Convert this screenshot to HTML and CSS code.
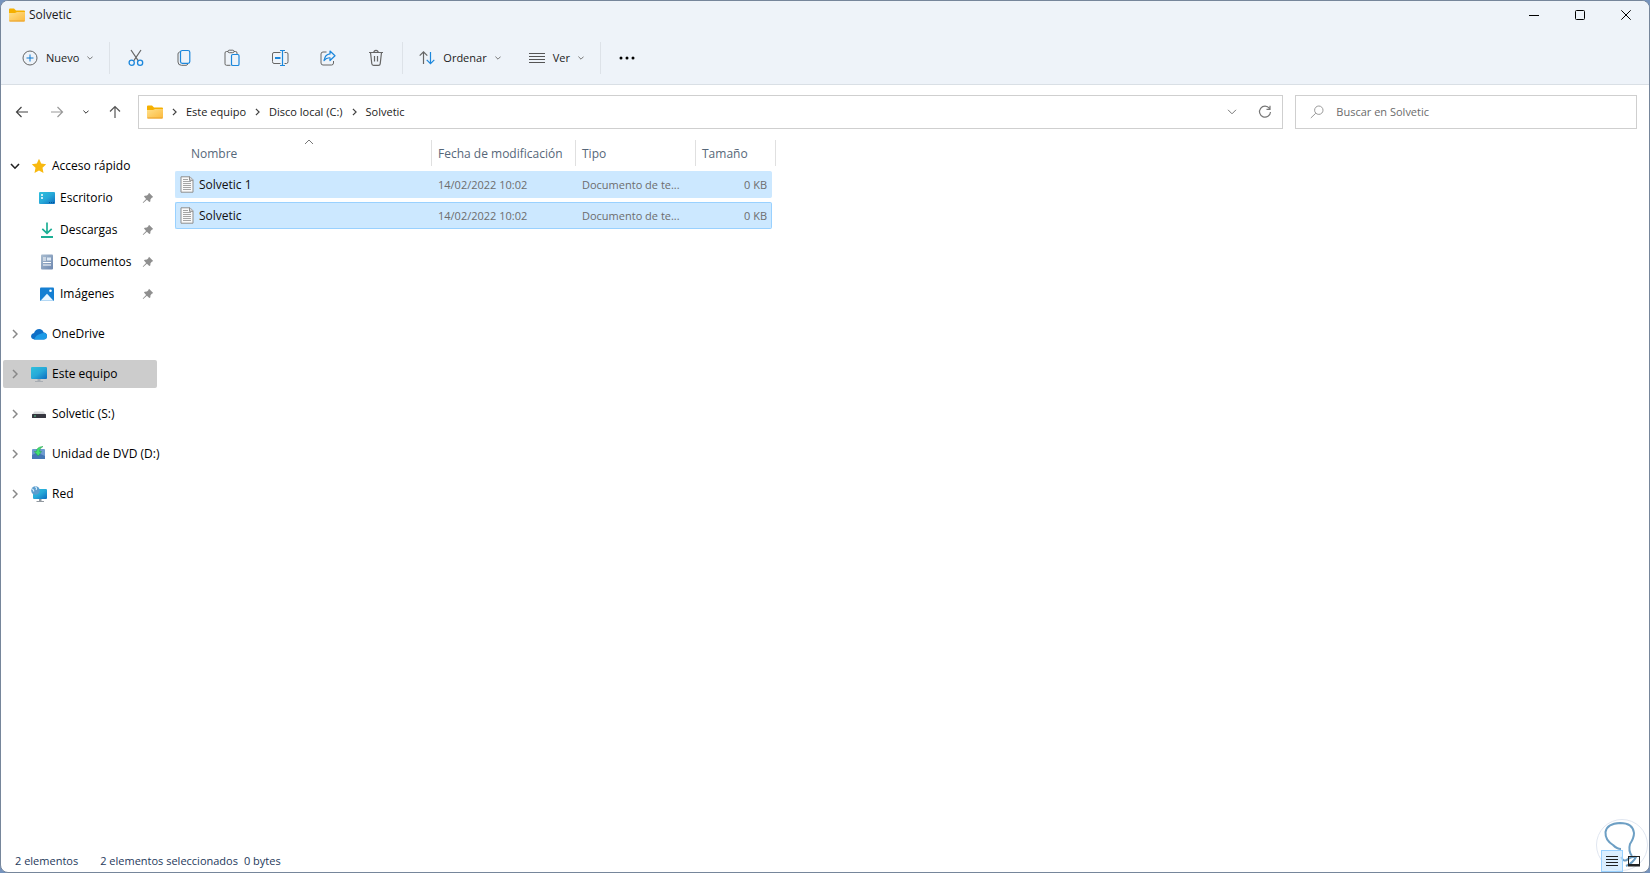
FILE: index.html
```html
<!DOCTYPE html>
<html lang="es">
<head>
    <meta charset="UTF-8">
    <meta name="viewport" content="width=device-width, initial-scale=1.0">
    <title>Solvetic</title>
    <link rel="stylesheet" href="styles.css">
</head>
<body>
    <!-- shared icons -->
    <svg class="sprite" aria-hidden="true">
        <defs>
            <linearGradient id="gFolder" x1="0" y1="0" x2="1" y2="1">
                <stop offset="0" stop-color="#ffe08a"/><stop offset="1" stop-color="#fbb93c"/>
            </linearGradient>
            <linearGradient id="gScreen" x1="0" y1="0" x2="1" y2="1">
                <stop offset="0" stop-color="#2fc0dc"/><stop offset=".5" stop-color="#27a9d8"/><stop offset="1" stop-color="#0c6cc0"/>
            </linearGradient>
            <linearGradient id="gDoc" x1="0" y1="0" x2="1" y2="1">
                <stop offset="0" stop-color="#a9bdd0"/><stop offset="1" stop-color="#6d87b0"/>
            </linearGradient>
        </defs>
        <symbol id="folder" viewBox="0 0 16 14">
            <path d="M0 1.500Q0 .5 1 .5H5L7 2.500H15Q16 2.500 16 3.500V6H0z" fill="#f5b000"/>
            <path d="M0 5H6L8 4H16V12.500Q16 13.500 15 13.500H1Q0 13.500 0 12.500z" fill="url(#gFolder)"/>
            <path d="M.5 13H15.500" stroke="#e9a02c"/>
        </symbol>
        <symbol id="down" viewBox="0 0 6 4"><path d="M.4 .6L3 3.200L5.600 .6" fill="none" stroke="currentColor"/></symbol>
        <symbol id="right" viewBox="0 0 6 10"><path d="M1 1L5 5L1 9" fill="none" stroke="currentColor" stroke-width="1.500"/></symbol>
        <symbol id="pin" viewBox="0 0 12 12">
            <path d="M7 .8L11.200 5L9.800 5.800L8.500 7.200L8.300 9.400L7.300 10L4.900 7.700L1.200 11L.7 10.500L4.100 6.900L2 4.600L2.700 3.700L5 3.600L6.300 2.200z" fill="#8f8f8f"/>
        </symbol>
        <symbol id="textfile" viewBox="0 0 14 17">
            <path d="M1 .8H10L13 3.800V16.200H1z" fill="#fafafa" stroke="#8d8d8d"/>
            <path d="M9.500 .8V4.300H13" fill="#ddd" stroke="#8d8d8d"/>
            <path d="M3 3.500H8M3 5.500H11M3 7.500H11M3 9.500H11M3 11.500H11M3 13.500H11" stroke="#a5a5a5"/>
        </symbol>
    </svg>

    <div class="window">
        <header class="top">
            <div class="titlebar">
                <svg class="folder"><use href="#folder"/></svg>
                <h1 class="title">Solvetic</h1>
                <div class="window-buttons">
                    <button type="button" aria-label="Minimizar"><svg width="10" height="10"><path d="M0 5.500H10" stroke="#000"/></svg></button>
                    <button type="button" aria-label="Maximizar"><svg width="10" height="10"><rect x=".5" y=".5" width="9" height="9" rx="1" fill="none" stroke="#000"/></svg></button>
                    <button type="button" aria-label="Cerrar"><svg width="10" height="10"><path d="M.3 .3L9.700 9.700M9.700 .3L.3 9.700" stroke="#000"/></svg></button>
                </div>
            </div>

            <div class="toolbar">
                <button type="button" class="menu-button">
                    <svg width="16" height="16" fill="none"><circle cx="8" cy="8" r="7" stroke="#666"/><path d="M4.500 8H11.500M8 4.500V11.500" stroke="#0f78d0"/></svg>
                    Nuevo
                    <svg class="arrow"><use href="#down"/></svg>
                </button>
                <span class="separator"></span>
                <div class="tools">
                    <button type="button" aria-label="Cortar">
                        <svg width="16" height="18" fill="none"><path d="M3 1L10.500 12.200M13 1L5.500 12.200" stroke="#666" stroke-width="1.200"/><circle cx="3.700" cy="13.800" r="2.600" stroke="#1c87dc" stroke-width="1.300"/><circle cx="12.100" cy="13.800" r="2.600" stroke="#1c87dc" stroke-width="1.300"/></svg>
                    </button>
                    <button type="button" aria-label="Copiar">
                        <svg width="16" height="18" fill="none"><path d="M4 3H3.500Q2 3.500 2 5V13Q2 16.300 5.500 16.300H10Q11.300 16.300 11.800 15" stroke="#666"/><rect x="4.500" y="1.500" width="9.300" height="12.800" rx="1.800" stroke="#1c87dc" stroke-width="1.200"/></svg>
                    </button>
                    <button type="button" aria-label="Pegar">
                        <svg width="16" height="18" fill="none"><path d="M6.500 16.300H2.500Q1 16.300 1 14.800V4Q1 2.500 2.500 2.500H4M10 2.500H11.500Q13 2.500 13 4V5" stroke="#666"/><rect x="4" y="1.200" width="6" height="2.500" rx="1.200" stroke="#666"/><rect x="7.500" y="5.500" width="7.500" height="11" rx="1.300" stroke="#1c87dc" stroke-width="1.200"/></svg>
                    </button>
                    <button type="button" aria-label="Cambiar nombre">
                        <svg width="18" height="18" fill="none"><path d="M9.500 3.500H3Q1.500 3.500 1.500 5V12.500Q1.500 14.500 3 14.500H9.500M13.500 3.500H15.500Q17 3.500 17 5V12.500Q17 14.500 15.500 14.500H13.500" stroke="#666"/><path d="M4 9H9.500" stroke="#1c87dc" stroke-width="2"/><path d="M9 1.500H14M9 16.500H14M11.500 1.500V16.500" stroke="#1c87dc" stroke-width="1.200"/></svg>
                    </button>
                    <button type="button" aria-label="Compartir">
                        <svg width="16" height="18" fill="none"><path d="M6.500 3H3Q1 3 1 5V14Q1 16 3 16H11.500Q13.500 16 13.500 14V12" stroke="#666"/><path d="M10 2L15 6.800L10 11.500V8.800Q6.500 8.500 4 11.500Q5 5.500 10 4.900z" stroke="#1c87dc" stroke-width="1.200" stroke-linejoin="round"/></svg>
                    </button>
                    <button type="button" aria-label="Eliminar">
                        <svg width="16" height="18" fill="none" stroke="#666"><path d="M1 3.500H15M5.800 3.500Q6 1.300 8 1.300T10.200 3.500M2.500 3.500L3.800 14.800Q4 16.300 5.500 16.300H10.500Q12 16.300 12.200 14.800L13.500 3.500M6.500 7V12.500M9.500 7V12.500" stroke-width="1.200"/></svg>
                    </button>
                </div>
                <span class="separator"></span>
                <div class="tools">
                    <button type="button" class="menu-button">
                        <svg width="16" height="16" fill="none" stroke-width="1.200"><path d="M4.500 14V2M.7 5.700L4.500 1.800L8.300 5.700" stroke="#666"/><path d="M11.500 2V14M7.700 9.800L11.500 13.700L15.300 9.800" stroke="#1c87dc"/></svg>
                        Ordenar
                        <svg class="arrow"><use href="#down"/></svg>
                    </button>
                    <button type="button" class="menu-button">
                        <svg width="16" height="16"><path d="M0 3.500H16M0 6.500H16M0 9.500H16M0 12.500H16" stroke="#555"/></svg>
                        Ver
                        <svg class="arrow"><use href="#down"/></svg>
                    </button>
                </div>
                <span class="separator"></span>
                <div class="tools">
                    <button type="button" aria-label="Ver más">
                        <svg width="16" height="4"><circle cx="2" cy="2" r="1.500"/><circle cx="8" cy="2" r="1.500"/><circle cx="14" cy="2" r="1.500"/></svg>
                    </button>
                </div>
            </div>
        </header>

        <div class="navbar">
            <div class="history">
                <button type="button" aria-label="Atrás"><svg width="14" height="14" fill="none" stroke="#444"><path d="M13 7H1.500M6.500 2L1.500 7L6.500 12" stroke-width="1.200"/></svg></button>
                <button type="button" aria-label="Adelante"><svg width="14" height="14" fill="none" stroke="#999"><path d="M1 7H12.500M7.500 2L12.500 7L7.500 12" stroke-width="1.200"/></svg></button>
                <button type="button" class="recent" aria-label="Recientes"><svg class="arrow"><use href="#down"/></svg></button>
                <button type="button" aria-label="Subir"><svg width="14" height="14" fill="none" stroke="#555"><path d="M7 13V1.500M2 6.500L7 1.500L12 6.500" stroke-width="1.200"/></svg></button>
            </div>
            <nav class="address" aria-label="Ruta">
                <svg class="folder"><use href="#folder"/></svg>
                <svg class="crumb-arrow"><use href="#right"/></svg>
                <a href="#">Este equipo</a>
                <svg class="crumb-arrow"><use href="#right"/></svg>
                <a href="#">Disco local (C:)</a>
                <svg class="crumb-arrow"><use href="#right"/></svg>
                <a href="#">Solvetic</a>
                <div class="address-buttons">
                    <button type="button" aria-label="Ubicaciones anteriores"><svg width="10" height="6" fill="none"><path d="M1 .8L5 4.800L9 .8" stroke="#777"/></svg></button>
                    <button type="button" aria-label="Actualizar"><svg width="14" height="14" fill="none" stroke="#777"><path d="M11.500 3.500A5.500 5.500 0 1 0 12.500 7M12 .8V4.300H8.500" stroke-width="1.200"/></svg></button>
                </div>
            </nav>
            <label class="search">
                <svg width="14" height="14" fill="none" stroke="#999"><circle cx="8.800" cy="5.200" r="4.200"/><path d="M5.800 8.200L.8 13"/></svg>
                <input type="search" aria-label="Buscar en Solvetic" placeholder="Buscar en Solvetic">
            </label>
        </div>

        <main class="content">
            <nav class="sidebar" aria-label="Panel de navegación">
                <div class="group">
                    <a class="item" href="#">
                        <svg class="toggle open" viewBox="0 0 10 7"><path d="M1 1L5 5.200L9 1" fill="none" stroke="#222" stroke-width="1.600"/></svg>
                        <svg class="icon" viewBox="0 0 16 16"><path d="M8 .8L10.200 5.600L15.200 6.200L11.500 9.700L12.500 15L8 12.400L3.500 15L4.500 9.700L.8 6.200L5.800 5.600z" fill="#f8b90f"/></svg>
                        Acceso rápido
                    </a>
                    <a class="item child" href="#">
                        <svg class="icon" viewBox="0 0 16 16"><rect y="2" width="16" height="12" rx="1" fill="url(#gScreen)"/><path d="M2 5H4M2 8H4" stroke="#fff" stroke-width="1.500"/><path d="M10 12.500H11M12 12.500H13M14 12.500H15" stroke="#075493"/></svg>
                        Escritorio
                        <svg class="pin"><use href="#pin"/></svg>
                    </a>
                    <a class="item child" href="#">
                        <svg class="icon" viewBox="0 0 16 16"><path d="M8 .5V11M3.300 6.800L8 11.300L12.700 6.800" fill="none" stroke="#1daf95" stroke-width="1.700"/><path d="M2 15H14" stroke="#1daf95" stroke-width="1.800"/></svg>
                        Descargas
                        <svg class="pin"><use href="#pin"/></svg>
                    </a>
                    <a class="item child" href="#">
                        <svg class="icon" viewBox="0 0 16 16"><rect x="2" y=".5" width="12" height="15" rx="1" fill="url(#gDoc)"/><path d="M4 4H7M4 6H7M4 8.500H12M4 11H12" stroke="#fff"/><rect x="8" y="3.500" width="4" height="3" fill="#dce9f5"/></svg>
                        Documentos
                        <svg class="pin"><use href="#pin"/></svg>
                    </a>
                    <a class="item child" href="#">
                        <svg class="icon" viewBox="0 0 16 16"><rect x="1" y="1.500" width="14" height="13.500" rx="1" fill="#157fd2"/><path d="M1.500 14.800L8 7.800L14.500 14.800z" fill="#eaf6ff"/><circle cx="11.500" cy="4.800" r="1.300" fill="#fff"/></svg>
                        Imágenes
                        <svg class="pin"><use href="#pin"/></svg>
                    </a>
                </div>
                <a class="item" href="#">
                    <svg class="toggle"><use href="#right"/></svg>
                    <svg class="icon" viewBox="0 0 16 16"><path d="M3.500 13.500Q0 13 0 10Q.3 7.300 3 7Q4.500 3 8.300 3Q11.500 3.200 12.500 6.200Q16 6.800 16 10Q15.800 13.500 12.500 13.500z" fill="#0f6fc6"/><path d="M3 13.400Q5 9 9 8Q12 6.500 14 7Q16 8 16 10.300Q15.800 13.500 12.500 13.500z" fill="#1e9be6"/></svg>
                    OneDrive
                </a>
                <a class="item selected" href="#">
                    <svg class="toggle"><use href="#right"/></svg>
                    <svg class="icon" viewBox="0 0 16 16"><rect y="1" width="16" height="12" rx="1" fill="url(#gScreen)"/><path d="M6.500 13H9.500V15H12V16H4V15H6.500z" fill="#a8adb3"/></svg>
                    Este equipo
                </a>
                <a class="item" href="#">
                    <svg class="toggle"><use href="#right"/></svg>
                    <svg class="icon" viewBox="0 0 16 16"><path d="M3.500 5.500H12.500L15 8.500H1z" fill="#d6d8da"/><rect x="1" y="8" width="14" height="4" rx=".5" fill="#35363f"/><rect x="3" y="9.500" width="2" height="1" fill="#57c98a"/></svg>
                    Solvetic (S:)
                </a>
                <a class="item" href="#">
                    <svg class="toggle"><use href="#right"/></svg>
                    <svg class="icon" viewBox="0 0 16 16"><rect x="1" y="3" width="13" height="10" rx="1" fill="#6f9bd0"/><path d="M1 9L6 6.500L14 10V13H1z" fill="#4577b5"/><path d="M12 .5Q5.500 .8 5.500 5.500H3.300L7.300 10L10.500 5.500H8.500Q8.500 2 12 .5z" fill="#43e070" stroke="#1c9d4b" stroke-width=".5"/></svg>
                    Unidad de DVD (D:)
                </a>
                <a class="item" href="#">
                    <svg class="toggle"><use href="#right"/></svg>
                    <svg class="icon" viewBox="0 0 16 16"><rect x="2" y="3" width="14" height="10" rx="1" fill="url(#gScreen)"/><path d="M8 13H10.500V15H13V16H5.500V15H8z" fill="#9299a0"/><circle cx="4.500" cy="4.500" r="4.300" fill="#5b9dce"/><path d="M1 3Q3 3.500 2.500 5.500M4 .8Q6.500 2 5 3.800" fill="none" stroke="#d5ecf9" stroke-width="1.200"/></svg>
                    Red
                </a>
            </nav>

            <section class="files">
                <table class="file-table">
                    <thead>
                        <tr>
                            <th class="col-name" aria-sort="ascending">Nombre<svg class="sort" viewBox="0 0 10 6"><path d="M1 5L5 1L9 5" fill="none" stroke="#777"/></svg></th>
                            <th class="col-date">Fecha de modificación</th>
                            <th class="col-type">Tipo</th>
                            <th class="col-size">Tamaño</th>
                        </tr>
                    </thead>
                    <tbody>
                        <tr>
                            <td><div class="file-name"><svg class="file-icon"><use href="#textfile"/></svg>Solvetic 1</div></td>
                            <td>14/02/2022 10:02</td>
                            <td>Documento de te...</td>
                            <td>0 KB</td>
                        </tr>
                        <tr class="focused">
                            <td><div class="file-name"><svg class="file-icon"><use href="#textfile"/></svg>Solvetic</div></td>
                            <td>14/02/2022 10:02</td>
                            <td>Documento de te...</td>
                            <td>0 KB</td>
                        </tr>
                    </tbody>
                </table>
            </section>
        </main>

        <footer class="statusbar">
            <span class="count">2 elementos</span>
            <span>2 elementos seleccionados</span>
            <span class="size">0 bytes</span>
            <div class="views">
                <button type="button" class="active" aria-label="Detalles"><svg width="12" height="12"><path d="M0 1.500H12M0 4.500H12M0 7.500H12M0 10.500H12" stroke="#222"/></svg></button>
                <button type="button" aria-label="Iconos grandes"><svg width="12" height="12" fill="none"><rect x=".5" y="1.500" width="11" height="8" stroke="#222"/><path d="M0 10.500H12" stroke="#222" stroke-width="2"/></svg></button>
            </div>
        </footer>

        <svg class="watermark" viewBox="0 0 54 54" fill="none" aria-hidden="true">
            <circle cx="27" cy="27" r="25.500" fill="#fff" stroke="#e0e6f0"/>
            <path d="M26 31Q22 31 18 27Q10 22 10.500 14Q12 5.500 25 5Q38 5 39 15Q39 20 35 26Q33 33 37 38" stroke="#6d9fc4" stroke-width="2"/>
            <path d="M26 39Q29 45 33 41Q38 38 41 39Q38 45 31 48" stroke="#6d9fc4" stroke-width="2"/>
        </svg>
    </div>
</body>
</html>
```

FILE: styles.css
```css
* {
    box-sizing: border-box;
}

body {
    margin: 0;
    background-color: #7593bd;
    color: #1b1b1b;
    font-family: "Open Sans", "Noto Sans", sans-serif;
    font-size: 12px;
    line-height: 16px;
}

button {
    display: flex;
    align-items: center;
    justify-content: center;
    padding: 0;
    border: none;
    background: none;
    color: inherit;
    font: inherit;
}

a {
    color: inherit;
    text-decoration: none;
}

svg {
    display: block;
    flex: none;
}

.sprite {
    position: absolute;
    width: 0;
    height: 0;
}

.window {
    position: relative;
    display: flex;
    flex-direction: column;
    min-height: 100vh;
    border: 1px solid #76869b;
    border-radius: 8px;
    background-color: #fff;
    overflow: hidden;
}

.top {
    background-color: #eef3f9;
    border-bottom: 1px solid #d9dfe5;
}

.folder {
    width: 16px;
    height: 14px;
}

/* title bar */
.titlebar {
    display: flex;
    align-items: center;
    gap: 4px;
    height: 30px;
    padding: 0 0 2px 8px;
}

.title {
    margin: 0;
    font-size: 12px;
    font-weight: normal;
}

.window-buttons {
    display: flex;
    margin-left: auto;
}

.window-buttons button {
    width: 46px;
    height: 28px;
}

/* toolbar */
.toolbar {
    display: flex;
    align-items: center;
    height: 53px;
    padding: 0 15px;
    font-size: 11px;
}

.tools {
    display: flex;
    gap: 16px;
}

.tools button {
    min-width: 32px;
    height: 32px;
}

.toolbar .menu-button {
    gap: 8px;
    height: 32px;
    padding: 0 6px;
}

.separator {
    width: 1px;
    height: 32px;
    margin: 0 10px;
    background-color: #dde2e8;
}

.arrow {
    width: 6px;
    height: 4px;
    color: #777;
}

/* navigation bar */
.navbar {
    display: flex;
    gap: 12px;
    padding: 10px 12px 10px 9px;
    font-size: 11px;
}

.history {
    display: flex;
    align-items: center;
    gap: 12px;
    width: 116px;
    padding-left: 1px;
}

.history button {
    width: 24px;
    height: 24px;
}

.history .recent {
    width: 12px;
}

.recent .arrow {
    color: #333;
}

.address,
.search {
    display: flex;
    align-items: center;
    height: 34px;
    border: 1px solid #cfcfcf;
}

.address {
    flex: 1;
    gap: 9px;
    padding: 0 5px 0 8px;
}

.crumb-arrow {
    width: 5px;
    height: 8px;
    color: #444;
}

.address-buttons {
    display: flex;
    gap: 9px;
    margin-left: auto;
}

.address-buttons button {
    width: 24px;
    height: 24px;
}

.search {
    width: 21%;
    gap: 12px;
    padding: 0 14px;
}

.search input {
    flex: 1;
    min-width: 0;
    padding: 0;
    border: none;
    outline: none;
    background: none;
    font: inherit;
}

.search input::placeholder {
    color: #6b6b6b;
    opacity: 1;
}

/* main area */
.content {
    display: flex;
    flex: 1;
}

.sidebar {
    display: flex;
    flex-direction: column;
    gap: 12px;
    width: 156px;
    padding: 13px 0 0 2px;
}

.group {
    display: flex;
    flex-direction: column;
    gap: 4px;
}

.item {
    display: flex;
    align-items: center;
    gap: 5px;
    height: 28px;
    padding-left: 7px;
    border-radius: 2px;
    color: #000;
    white-space: nowrap;
}

.item.child {
    padding: 0 3px 0 36px;
}

.item.selected {
    background-color: #ccc;
}

.toggle {
    width: 6px;
    height: 10px;
    margin: 0 8px 0 2px;
    color: #888;
}

.toggle.open {
    width: 10px;
    height: 7px;
    margin: 0 6px 0 0;
}

.icon {
    width: 16px;
    height: 16px;
}

.pin {
    width: 12px;
    height: 12px;
    margin-left: auto;
}

/* file list */
.files {
    flex: 1;
    padding-left: 18px;
}

.file-table {
    width: 597px;
    margin-top: -4px;
    table-layout: fixed;
    border-spacing: 0 4px;
    color: #6d6d6d;
}

.file-table th {
    position: relative;
    height: 28px;
    padding: 2px 6px 0;
    color: #566779;
    font-weight: normal;
    text-align: left;
}

.file-table .col-name {
    width: 257px;
    padding-left: 16px;
}

.col-date {
    width: 144px;
}

.col-type {
    width: 120px;
}

.file-table th::after {
    content: "";
    position: absolute;
    top: 1px;
    right: 0;
    width: 1px;
    height: 26px;
    background-color: #e0e0e0;
}

.file-table .col-size::after {
    right: -4px;
}

.sort {
    position: absolute;
    top: 0;
    left: 50%;
    width: 10px;
    height: 6px;
}

.file-table td {
    height: 27px;
    padding: 0 6px;
    border: 1px solid #cce8ff;
    border-width: 1px 0;
    background-color: #cce8ff;
    font-size: 11px;
    white-space: nowrap;
}

.file-table td:first-child {
    border-left-width: 1px;
    border-radius: 2px 0 0 2px;
    padding-left: 4px;
    color: #111;
    font-size: 12px;
}

.file-table td:last-child {
    border-right-width: 1px;
    border-radius: 0 2px 2px 0;
    padding-right: 4px;
    text-align: right;
}

.file-table .focused td {
    border-color: #99d1ff;
}

.file-name {
    display: flex;
    align-items: center;
    gap: 5px;
}

.file-icon {
    width: 14px;
    height: 17px;
}

/* status bar */
.statusbar {
    display: flex;
    align-items: center;
    height: 24px;
    padding: 1px 4px 0 14px;
    color: #1e395b;
    font-size: 11px;
}

.count {
    margin-right: 22px;
}

.size {
    margin-left: 6px;
}

.views {
    position: relative;
    z-index: 1;
    display: flex;
    margin-left: auto;
}

.views button {
    width: 22px;
    height: 22px;
}

.views .active {
    border: 1px solid #99d1ff;
    background-color: rgba(204, 232, 255, 0.7);
}

.watermark {
    position: absolute;
    right: 0;
    bottom: 0;
    width: 54px;
    height: 54px;
    pointer-events: none;
}
```
